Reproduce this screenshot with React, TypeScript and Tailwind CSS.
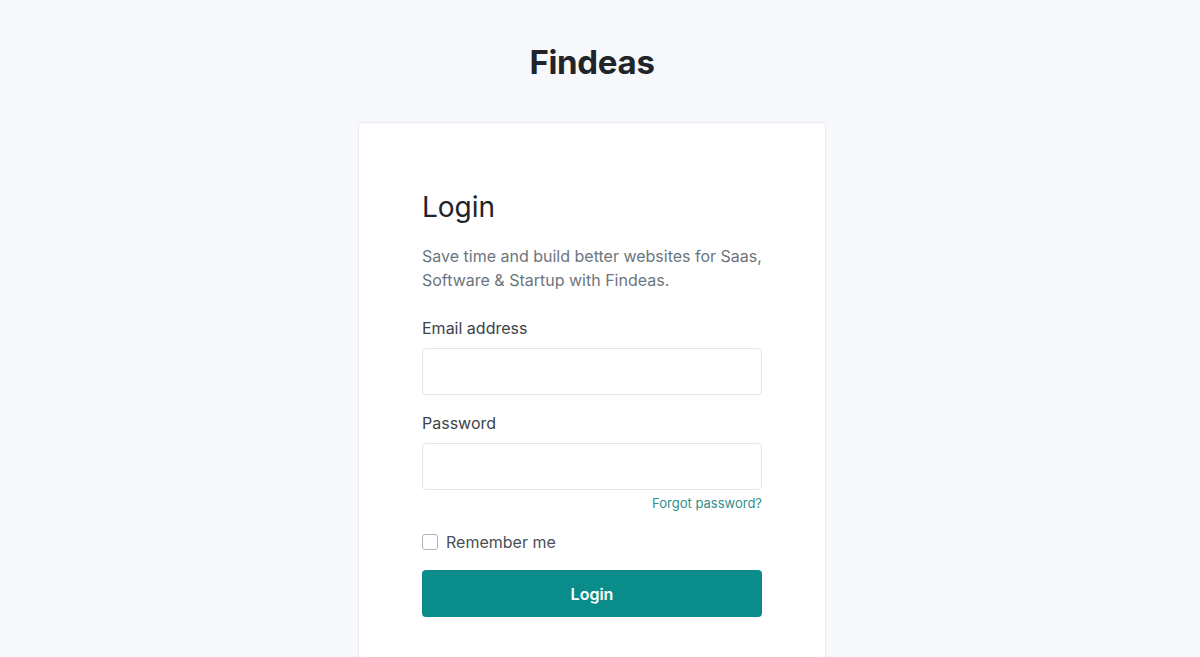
import React from 'react';

const App = () => {
  return (
    <div className="min-h-screen bg-[#f7f8fc] flex flex-col items-center pr-[16px] font-['Inter',sans-serif]">
      {/* Brand */}
      <h1 className="mt-[41px] h-[42px] text-[33px] leading-[42px] font-bold text-[#212529] tracking-[-0.3px]">Findeas</h1>

      {/* Card */}
      <div className="mt-[39px] w-[468px] bg-white border border-[#e9ebf2] rounded-[4px] px-[63px] pt-[66px] pb-[40px]">
        <h2 className="text-[28px] leading-[36px] text-[#212529] font-normal">Login</h2>
        <p className="mt-[19px] text-[16px] leading-[24px] text-[#6c757d]">
          Save time and build better websites for Saas, Software &amp; Startup with Findeas.
        </p>

        <form className="mt-[24px]" onSubmit={(e) => e.preventDefault()}>
          <label className="block text-[16px] leading-[24px] text-[#3d4349]">Email address</label>
          <input
            type="email"
            className="mt-[8px] block w-full h-[47px] border border-[#e6e6e6] rounded-[4px] px-3 outline-none"
          />

          <label className="block mt-[16px] text-[16px] leading-[24px] text-[#3d4349]">Password</label>
          <input
            type="password"
            className="mt-[8px] block w-full h-[47px] border border-[#e6e6e6] rounded-[4px] px-3 outline-none"
          />
          <div className="mt-[4px] text-right text-[13px] leading-[18px] text-[#2f8f8d]">Forgot password?</div>

          <label className="mt-[18px] flex items-center gap-[8px] text-[16px] leading-[24px] text-[#495057]">
            <span className="w-[16px] h-[16px] border border-[#adb5bd] rounded-[3px] bg-white" />
            Remember me
          </label>

          <button
            type="submit"
            className="mt-[16px] w-full h-[47px] rounded-[4px] bg-[#0a8c8a] text-white text-[16px] font-semibold"
          >
            Login
          </button>
        </form>
      </div>
    </div>
  );
};

export default App;
